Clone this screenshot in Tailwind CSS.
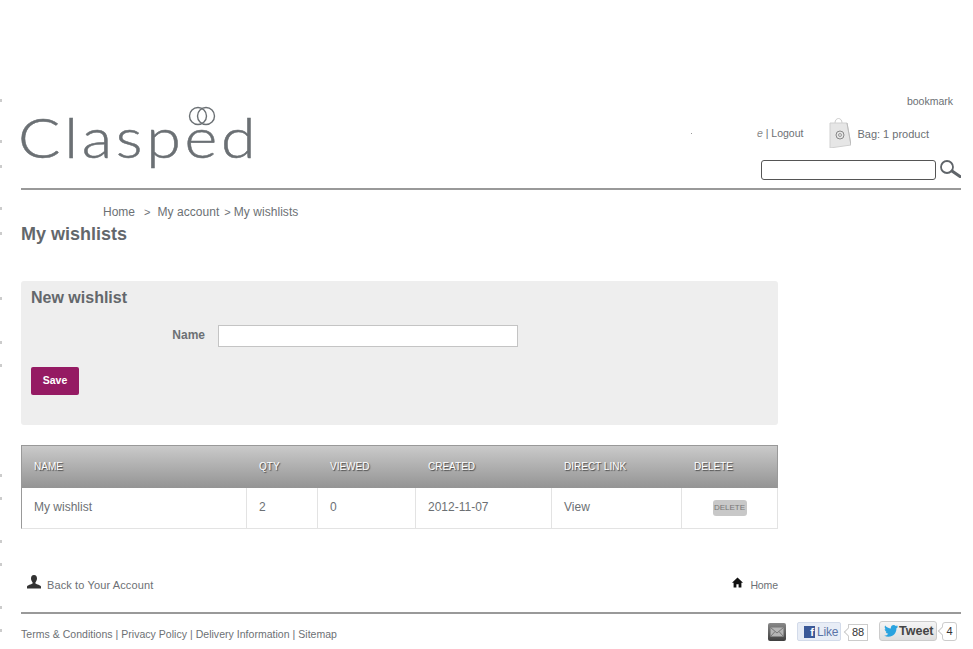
<!DOCTYPE html>
<html lang="en">
<head>
    <meta charset="UTF-8">
    <title>My wishlists - Clasped</title>
    <script src="https://cdn.jsdelivr.net/npm/@tailwindcss/browser@4"></script>
</head>
<body class="bg-white font-['Liberation_Sans',Arial,sans-serif] text-[12px] text-[#6c7074] relative overflow-hidden h-[649px]">

    <!-- stray bullets on the left edge -->
    <div class="absolute left-0 top-[99px] w-[2px] h-[3px] bg-[#ccc]"></div>
    <div class="absolute left-0 top-[140px] w-[2px] h-[3px] bg-[#ccc]"></div>
    <div class="absolute left-0 top-[165px] w-[2px] h-[3px] bg-[#ccc]"></div>
    <div class="absolute left-0 top-[207px] w-[2px] h-[3px] bg-[#ccc]"></div>
    <div class="absolute left-0 top-[232px] w-[2px] h-[3px] bg-[#ccc]"></div>
    <div class="absolute left-0 top-[297px] w-[2px] h-[3px] bg-[#ccc]"></div>
    <div class="absolute left-0 top-[341px] w-[2px] h-[3px] bg-[#ccc]"></div>
    <div class="absolute left-0 top-[364px] w-[2px] h-[3px] bg-[#ccc]"></div>
    <div class="absolute left-0 top-[474px] w-[2px] h-[3px] bg-[#ccc]"></div>
    <div class="absolute left-0 top-[497px] w-[2px] h-[3px] bg-[#ccc]"></div>
    <div class="absolute left-0 top-[540px] w-[2px] h-[3px] bg-[#ccc]"></div>
    <div class="absolute left-0 top-[563px] w-[2px] h-[3px] bg-[#ccc]"></div>
    <div class="absolute left-0 top-[606px] w-[2px] h-[3px] bg-[#ccc]"></div>
    <div class="absolute left-0 top-[629px] w-[2px] h-[3px] bg-[#ccc]"></div>

    <div class="ml-[21px] w-[940px] pt-[95px]">

        <!-- Header -->
        <header class="relative h-[93px] border-b-2 border-[#999] box-content flex justify-between">
            <div class="relative w-[240px] h-[80px]">
                <span class="absolute left-[-3px] top-[2px] origin-left scale-x-[1.12] font-['Lato',sans-serif] font-light text-[56px] leading-[80px] tracking-[3.35px] text-[#6b7074] [-webkit-text-stroke:0.5px_#6b7074]">Clasped</span>
                <svg class="absolute left-[167px] top-[11px]" width="28" height="20" viewBox="0 0 28 20" fill="none" stroke="#6b7074" stroke-width="1.4">
                    <circle cx="10" cy="10" r="8.5"/>
                    <circle cx="18" cy="10" r="8.5"/>
                </svg>
            </div>
            <span class="absolute left-[670px] top-[38px] w-[1px] h-[1px] bg-[#999]"></span>
            <div class="flex flex-col items-end w-[300px]">
                <a class="text-[10.5px] leading-[12px] mr-[8px]">bookmark</a>
                <div class="flex items-center h-[36px] mt-[9px] mr-[32px]">
                    <span class="text-[10.5px] mr-[24px]"><i class="text-[#888]">e</i> | Logout</span>
                    <svg class="mr-[6px] mb-[4px]" width="24" height="32" viewBox="0 0 24 32">
                        <path d="M8 7 C8 1 15 1 15 7" fill="none" stroke="#ccc"/>
                        <path d="M3 7 H20 L24 29 L3 32 Z" fill="#e6e6e6" stroke="#d0d0d0"/>
                        <path d="M20 7 L24 29" stroke="#bbb"/>
                        <circle cx="13" cy="19" r="4" fill="none" stroke="#888"/>
                        <circle cx="13" cy="19" r="1.5" fill="none" stroke="#888" stroke-width=".8"/>
                    </svg>
                    <span class="text-[11px]">Bag: 1 product</span>
                </div>
                <div class="flex items-start mt-[7px]">
                    <input type="text" class="w-[175px] h-[20px] mt-[1px] bg-white border border-[#555] rounded-[3px]">
                    <svg class="ml-[3px]" width="22" height="20" viewBox="0 0 22 20" fill="none" stroke="#5f6469">
                        <circle cx="8" cy="8" r="6" stroke-width="1.8"/>
                        <path d="M13 12 L21 17.500" stroke-width="3" stroke-linecap="round"/>
                    </svg>
                </div>
            </div>
        </header>

        <!-- Breadcrumb -->
        <nav class="ml-[82px] mt-[15px] leading-[14px] text-[12px]">
            <span>Home</span><span class="text-[11px] ml-[9px] mr-[7px]">&gt;</span><span class="tracking-[0.05px]">My account</span><span class="text-[11px] ml-[5px] mr-[3px]">&gt;</span><span class="tracking-[0.05px]">My wishlists</span>
        </nav>
        <h1 class="text-[18px] font-bold leading-[20px] mt-[5px] text-[#63676b]">My wishlists</h1>

        <div class="w-[757px]">
            <!-- New wishlist form -->
            <section class="mt-[37px] h-[144px] bg-[#eeeeee] rounded-[3px] pl-[10px] pt-[8px]">
                <h3 class="text-[16px] font-bold leading-[18px] text-[#63676b]">New wishlist</h3>
                <div class="flex items-start mt-[18px]">
                    <label class="w-[174px] text-right font-bold leading-[20px]">Name</label>
                    <input type="text" class="ml-[13px] w-[300px] h-[22px] bg-white border border-[#c4c4c4]">
                </div>
                <button class="block mt-[20px] w-[48px] h-[28px] rounded-[2px] bg-[#951a63] text-white font-bold text-[10.5px]">Save</button>
            </section>

            <!-- Wishlists table -->
            <div class="mt-[20px]">
                <div class="grid grid-cols-[225px_71px_98px_136px_130px_97px] h-[43px] items-center pb-[2px] border border-b-0 border-[#999] bg-gradient-to-b from-[#cacaca] to-[#949494] text-white text-[10px] uppercase [text-shadow:1px_1px_1px_#444]">
                    <span class="pl-[12px]">Name</span>
                    <span class="pl-[12px]">Qty</span>
                    <span class="pl-[12px]">Viewed</span>
                    <span class="pl-[12px]">Created</span>
                    <span class="pl-[12px]">Direct link</span>
                    <span class="pl-[12px]">Delete</span>
                </div>
                <div class="grid grid-cols-[225px_71px_98px_136px_130px_97px] h-[41px] border-b border-r border-[#e3e3e3] border-l-[#999] border-l text-[12px]">
                    <span class="flex items-center pl-[12px] pb-[3px] border-r border-[#e3e3e3]">My wishlist</span>
                    <span class="flex items-center pl-[12px] pb-[3px] border-r border-[#e3e3e3]">2</span>
                    <span class="flex items-center pl-[12px] pb-[3px] border-r border-[#e3e3e3]">0</span>
                    <span class="flex items-center pl-[12px] pb-[3px] border-r border-[#e3e3e3]">2012-11-07</span>
                    <span class="flex items-center pl-[12px] pb-[3px] border-r border-[#e3e3e3]">View</span>
                    <span class="flex items-center justify-center pr-[2px] pb-[1px]">
                        <button class="w-[34px] h-[16px] rounded-[3px] bg-[#c8c8c8] text-[#777] text-[8px]">DELETE</button>
                    </span>
                </div>
            </div>

            <!-- Account links -->
            <div class="flex justify-between items-end h-[15px] mt-[45px] pl-[6px] text-[11px]">
                <a class="flex items-end">
                    <svg width="14" height="14" viewBox="0 0 14 14" fill="#333"><path d="M7 0 C4.8 0 4 1.6 4 3.5 C4 5.3 5 6.6 5.6 7.4 V8.4 C4 9.4 .6 9.800 0 11.5 V13.5 H14 V11.5 C13.4 9.800 10 9.4 8.4 8.400 V7.4 C9 6.6 10 5.3 10 3.5 C10 1.6 9.2 0 7 0 Z"/></svg>
                    <span class="ml-[6px] leading-[12px] mb-[-2px] tracking-[0.12px]">Back to Your Account</span>
                </a>
                <a class="flex items-end">
                    <svg class="mb-[1px]" width="11" height="11" viewBox="0 0 11 11" fill="#111"><path d="M5.5 .5 L11 5.7 H9.4 V10.5 H6.6 V7.2 H4.4 V10.5 H1.6 V5.7 H0 Z"/></svg>
                    <span class="ml-[7px] leading-[12px] mb-[-2px] text-[10.5px] tracking-[-0.1px] whitespace-nowrap">Home</span>
                </a>
            </div>
        </div>

        <!-- Footer -->
        <footer class="mt-[23px] border-t-2 border-[#999] flex justify-between pt-[7px]">
            <p class="text-[10.5px] leading-[12px] mt-[7px] tracking-[0.03px]">Terms &amp; Conditions | Privacy Policy | Delivery Information | Sitemap</p>
            <div class="flex items-start mr-[4px]">
                <svg class="mt-[2px] mr-[11px]" width="18" height="18" viewBox="0 0 18 18">
                    <defs><linearGradient id="mailBg" x1="0" y1="0" x2="0" y2="1"><stop offset="0" stop-color="#8a8a8a"/><stop offset="1" stop-color="#3f3f3f"/></linearGradient></defs>
                    <rect width="18" height="18" rx="2" fill="url(#mailBg)"/>
                    <rect x="2.5" y="4.5" width="13" height="9" fill="#b5b5b5"/>
                    <path d="M2.5 4.5 L9 10 L15.5 4.5 M2.5 13.5 L7 8.5 M15.5 13.5 L11 8.5" fill="none" stroke="#777"/>
                </svg>
                <div class="flex items-center w-[44px] h-[19px] mt-[1px] pl-[6px] rounded-[2px] bg-[#e8edf6] border border-[#d3dbea] text-[#5a74a8] text-[12px]">
                    <span class="flex justify-end items-end w-[11px] h-[12px] pr-[1px] bg-[#3b5998] text-white font-bold text-[11px] leading-[11px]">f</span>
                    <span class="ml-[2px] tracking-[-0.2px]">Like</span>
                </div>
                <div class="relative ml-[7px] mt-[3px] h-[17px] w-[20px] bg-white border border-[#ccc] text-[#333] text-[11px] leading-[15px] text-center">
                    88
                    <span class="absolute left-[-4px] top-[4px] w-[6px] h-[6px] rotate-45 bg-white border-l border-b border-[#ccc]"></span>
                </div>
                <div class="flex items-center w-[58px] h-[20px] ml-[11px] pl-[4px] rounded-[3px] bg-gradient-to-b from-[#f5f5f5] to-[#dedede] border border-[#ccc] font-bold text-[#444] text-[12.5px]">
                    <svg width="14" height="12" viewBox="0 0 24 21" fill="#2aa3df"><path d="M24 2.4c-.9.4-1.800.7-2.800.8 1-.6 1.800-1.600 2.200-2.700-1 .6-2 1-3.100 1.200C19.300.7 18 0 16.600 0c-2.700 0-4.900 2.200-4.900 4.900 0 .4 0 .8.1 1.100C7.700 5.800 4.100 3.800 1.700.9 1.200 1.600 1 2.500 1 3.400c0 1.700.9 3.200 2.200 4.100-.8 0-1.600-.2-2.200-.6v.1c0 2.400 1.700 4.400 3.900 4.800-.4.100-.8.200-1.300.2-.3 0-.6 0-.9-.1.600 2 2.400 3.400 4.600 3.400C5.600 17.600 3.500 18.400 1.200 18.400c-.4 0-.8 0-1.200-.1 2.200 1.400 4.800 2.200 7.500 2.200 9.100 0 14-7.500 14-14v-.6c1-.7 1.800-1.600 2.500-2.500z"/></svg>
                    <span class="ml-[1px]">Tweet</span>
                </div>
                <div class="relative ml-[5px] mt-[1px] h-[19px] w-[15px] bg-white border border-[#ccc] rounded-[3px] text-[#333] text-[11px] leading-[17px] text-center">
                    4
                    <span class="absolute left-[-4px] top-[5px] w-[6px] h-[6px] rotate-45 bg-white border-l border-b border-[#ccc]"></span>
                </div>
            </div>
        </footer>
    </div>

</body>
</html>
